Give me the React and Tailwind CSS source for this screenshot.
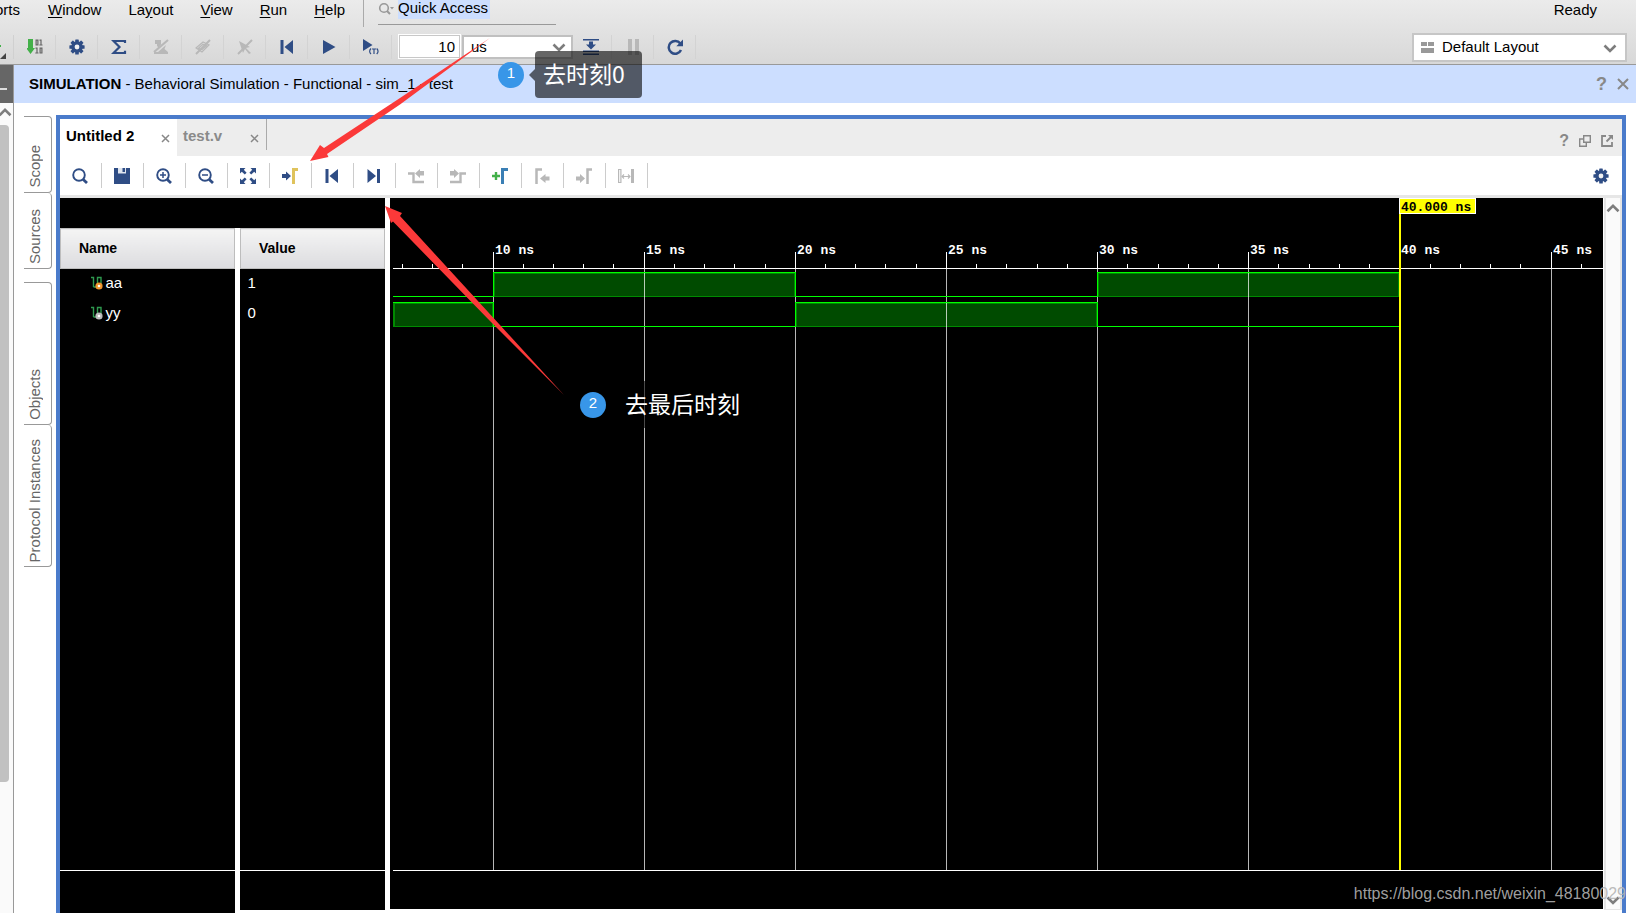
import React from 'react'
import clsx from 'clsx'

const BLUE = '#2f4d85'
const GREY = '#b8b8b8'

function Icon({ children, size = 16, className }) {
  return (
    <svg width={size} height={size} viewBox="0 0 16 16" fill="none" className={clsx('shrink-0', className)} aria-hidden="true">
      {children}
    </svg>
  )
}

function Gear() {
  return (
    <Icon>
      {[0, 45, 90, 135].map((a) => (
        <rect key={a} x="6.2" y="0.4" width="3.6" height="15.2" rx="0.6" fill={BLUE} transform={`rotate(${a} 8 8)`} />
      ))}
      <circle cx="8" cy="8" r="5.8" fill={BLUE} />
      <circle cx="8" cy="8" r="2.4" fill="#f2f2f2" />
    </Icon>
  )
}

function Chevron({ up, className }) {
  return (
    <svg width="14" height="9" viewBox="0 0 14 9" fill="none" className={className} aria-hidden="true">
      <path d={up ? 'M1.5 7.2 7 1.9l5.5 5.3' : 'M1.5 1.5 7 6.9l5.5-5.4'} stroke="#7d7d7d" strokeWidth="2.6" />
    </svg>
  )
}

function Magnifier({ sign }) {
  return (
    <Icon>
      <circle cx="7" cy="7" r="5.8" stroke={BLUE} strokeWidth="1.9" />
      <path d="m11 11.3 4 3.7" stroke={BLUE} strokeWidth="2.8" />
      {sign && <path d="M4 7h6" stroke={BLUE} strokeWidth="1.5" />}
      {sign === '+' && <path d="M7 4v6" stroke={BLUE} strokeWidth="1.5" />}
    </Icon>
  )
}

function ToStart() {
  return (
    <Icon>
      <path d="M1.5 1h3v14h-3zM14 1v14L5.500 8z" fill={BLUE} />
    </Icon>
  )
}

const mainTools = [
  {
    label: 'Program device',
    icon: (
      <Icon>
        <path d="M1 0h5v9h2l-4.500 6L-1 9h2z" fill="#43b049" />
        <g stroke="#666" strokeWidth="1.2">
          <path d="M9.1 1.1h1.8v4.8H9.1zM12.5 1.2H14V6M12.3 6h3.200M8.500 9.100H10V14M8.300 14h3.200M13.100 9.100h1.800V14h-1.800z" />
        </g>
      </Icon>
    ),
  },
  { label: 'Settings', icon: <Gear /> },
  {
    label: 'Report summary',
    icon: (
      <Icon>
        <path d="M14 4V2H2.5l6 6-6 6H14v-2.300" stroke={BLUE} strokeWidth="2.2" />
      </Icon>
    ),
  },
  {
    label: 'Disable schematic',
    icon: (
      <Icon>
        <path d="M2 1h6v4.500L5.500 8.500 4 7V5H2zM13 6l-1.500 4 3.500 3v2H1v-2h4z" fill={GREY} />
        <path d="M15 1 1 13" stroke={GREY} strokeWidth="2.2" />
      </Icon>
    ),
  },
  {
    label: 'Disable probe',
    icon: (
      <Icon>
        <path d="M1 9 8 3l6 3-7 7z M3.500 9.300 8 5.300l3.500 1.300-4.600 4z" stroke={GREY} strokeWidth="1.2" />
        <path d="M15 1 1 15" stroke={GREY} strokeWidth="2" />
      </Icon>
    ),
  },
  {
    label: 'Disable selection',
    icon: (
      <Icon>
        <path d="m2 2 11 6-4 1 5 5-2 1-4-5-2 4z" fill={GREY} />
        <path d="M15 1 1 15" stroke={GREY} strokeWidth="2" />
      </Icon>
    ),
  },
  { label: 'Restart', icon: <ToStart /> },
  {
    label: 'Run all',
    icon: (
      <Icon>
        <path d="M2 1v14l12.500-7z" fill={BLUE} />
      </Icon>
    ),
  },
  {
    label: 'Run for time',
    icon: (
      <Icon>
        <path d="M0 0v12l9.500-6z" fill={BLUE} />
        <path d="M8 9.500c-1.800 1.700-1.800 3.800 0 5.500M13.700 9.500c1.800 1.700 1.800 3.800 0 5.500M9 10h4M11 10v5" stroke={BLUE} strokeWidth="1.2" />
      </Icon>
    ),
  },
]

const runTools = [
  {
    label: 'Step',
    icon: (
      <Icon>
        <path d="M0 0h16v1.500H0zM0 11.500h16V13H0zM0 14.500h16V16H0zM6 2.500h4v3h3L8 10.500l-5-5h3z" fill={BLUE} />
      </Icon>
    ),
  },
  {
    label: 'Pause',
    icon: (
      <Icon>
        <path d="M3 0h4v16H3zM10 0h4v16h-4z" fill={GREY} />
      </Icon>
    ),
  },
  {
    label: 'Relaunch',
    icon: (
      <Icon>
        <path d="M13.3 4.500A6.400 6.400 0 1 0 14 11" stroke={BLUE} strokeWidth="2.5" />
        <path d="M16 .5v6.700H9.300z" fill={BLUE} />
      </Icon>
    ),
  },
]

const waveTools = [
  { label: 'Search', icon: <Magnifier /> },
  {
    label: 'Save',
    icon: (
      <Icon>
        <path d="M0 0h16v16H0z" fill={BLUE} />
        <path d="M4 0h8v5.500H4z" fill="#dfe5ef" />
        <path d="M8.500 0H11v4H8.500z" fill={BLUE} />
      </Icon>
    ),
  },
  { label: 'Zoom in', icon: <Magnifier sign="+" /> },
  { label: 'Zoom out', icon: <Magnifier sign="-" /> },
  {
    label: 'Zoom fit',
    icon: (
      <Icon>
        <path d="M0 0h5.500L3.800 1.800 6.600 4.800 4.800 6.600 1.800 3.800 0 5.500zM16 0v5.500l-1.800-1.700-3 2.800-1.800-1.800 2.800-3L10.500 0zM0 16v-5.500l1.800 1.700 3-2.800 1.800 1.800-2.800 3L5.500 16zM16 16h-5.500l1.700-1.800-2.800-3 1.800-1.800 3 2.800 1.800-1.700z" fill={BLUE} />
      </Icon>
    ),
  },
  {
    label: 'Go to cursor',
    icon: (
      <Icon>
        <path d="M0 6h4V3.500L9 8l-5 4.500V10H0z" fill={BLUE} />
        <path d="M11.500 16V1.500H16" stroke="#dfc35c" strokeWidth="3" />
      </Icon>
    ),
  },
  { label: 'Go to time 0', icon: <ToStart /> },
  {
    label: 'Go to last time',
    icon: (
      <Icon>
        <path d="M11 1h3v14h-3zM1.500 1v14L10 8z" fill={BLUE} />
      </Icon>
    ),
  },
  {
    label: 'Previous transition',
    icon: (
      <Icon>
        <path d="M0 5.500h5.500V14H16" stroke={GREY} strokeWidth="2.4" />
        <path d="M16 3v4.500h-4V10L7 5.500 12 1v2z" fill={GREY} />
      </Icon>
    ),
  },
  {
    label: 'Next transition',
    icon: (
      <Icon>
        <path d="M0 14h10.500V5.500H16" stroke={GREY} strokeWidth="2.4" />
        <path d="M0 3v4.500h4V10l5-4.500L4 1v2z" fill={GREY} />
      </Icon>
    ),
  },
  {
    label: 'Add marker',
    icon: (
      <Icon>
        <path d="M0 8h8M4 4v8" stroke="#43b049" strokeWidth="2.4" />
        <path d="M10.500 16V1.500H16" stroke="#3a7fb5" strokeWidth="3" />
      </Icon>
    ),
  },
  {
    label: 'Previous marker',
    icon: (
      <Icon>
        <path d="M2.500 16V1.500h5.500" stroke={GREY} strokeWidth="2.5" />
        <path d="M15.500 8.500v4h-4V15L6 10.500 11.500 6v2.500z" fill={GREY} />
      </Icon>
    ),
  },
  {
    label: 'Next marker',
    icon: (
      <Icon>
        <path d="M11.500 16V1.500H16" stroke={GREY} strokeWidth="2.5" />
        <path d="M0 8.500v4h4V15l5-4.500L4 6v2.500z" fill={GREY} />
      </Icon>
    ),
  },
  {
    label: 'Swap cursors',
    icon: (
      <Icon>
        <path d="M.6 1.500h2.300v13H.6z" stroke={GREY} strokeWidth="1.2" />
        <path d="M13 1h3v14h-3z" fill={GREY} />
        <path d="M4 8.500h8M6 6.500l-2 2 2 2M10 6.500l2 2-2 2" stroke={GREY} strokeWidth="1.1" />
      </Icon>
    ),
  },
]

const menus = [
  ['', 'W', 'indow'],
  ['La', 'y', 'out'],
  ['', 'V', 'iew'],
  ['', 'R', 'un'],
  ['', 'H', 'elp'],
]

const signals = [
  { name: 'aa', value: '1', badge: '#f0932b', high: [[10, 20], [30, 40]], low: [[null, 10], [20, 30]] },
  { name: 'yy', value: '0', badge: '#b9b9b9', high: [[null, 10], [20, 30]], low: [[10, 20], [30, 40]] },
]

function SignalIcon({ badge }) {
  return (
    <svg width="12" height="14" viewBox="0 0 12 14" fill="none" className="shrink-0" aria-hidden="true">
      <path d="M0 1.5h2.500V11M2.500 11h3M6.500 9V1.500H10V9" stroke="#2f9a4f" strokeWidth="1.4" />
      <circle cx="8" cy="10" r="3.6" fill={badge} />
      <circle cx="8" cy="10" r="1.3" fill="#fff" />
    </svg>
  )
}

// time in ns -> x in the wave area
const toX = (t) => (t === null ? 0 : Math.floor(100 + (t - 10) * 30.23))

const range = (from, to) => Array.from({ length: to - from + 1 }, (_, i) => from + i)

function Waveform() {
  const major = [10, 15, 20, 25, 30, 35, 40, 45]
  const minor = range(7, 48).filter((t) => t % 5 !== 0)

  return (
    <svg className="block h-full w-full" shapeRendering="crispEdges">
      {signals.map((s, i) => {
        const top = 74 + i * 30
        return (
          <g key={s.name}>
            {s.high.map(([a, b]) => (
              <g key={b}>
                <rect x={toX(a)} y={top} width={toX(b) - toX(a)} height="25" fill="#008a00" />
                <rect x={toX(a) + 2} y={top + 2} width={toX(b) - toX(a) - 3} height="22" fill="#004b00" />
              </g>
            ))}
          </g>
        )
      })}

      {major.map((t) => (
        <rect key={t} x={toX(t)} y="71" width="1" height="100%" fill="#fff" fillOpacity="0.72" />
      ))}

      {signals.map((s, i) => {
        const top = 74 + i * 30
        return (
          <g key={s.name} fill="#00ff00">
            {s.high.map(([a, b]) => (
              <rect key={b} x={toX(a)} y={top} width={toX(b) - toX(a)} height="1" />
            ))}
            {s.low.map(([a, b]) => (
              <rect key={b} x={toX(a)} y={top + 24} width={toX(b) - toX(a)} height="1" />
            ))}
            {[10, 20, 30].map((t) => (
              <rect key={t} x={toX(t)} y={top} width="1" height="25" />
            ))}
          </g>
        )
      })}

      <g fill="#fff">
        <rect x="0" y="70" width="100%" height="1" />
        {major.map((t) => (
          <rect key={t} x={toX(t)} y="54" width="1" height="16" />
        ))}
        {minor.map((t) => (
          <rect key={t} x={toX(t)} y="66" width="1" height="4" />
        ))}
      </g>

      <g className="font-['Liberation_Mono',monospace] text-[13px] font-bold" fill="#fff">
        {major.map((t) => (
          <text key={t} x={toX(t) + 2} y="56">{t} ns</text>
        ))}
      </g>

      <rect x={toX(40)} y="0" width="2" height="100%" fill="#ffff00" />
      <rect x={toX(40)} y="0" width="77" height="16" fill="#fff" />
      <rect x={toX(40) + 1} y="1" width="75" height="14" fill="#ffff00" />
      <text x={toX(40) + 2} y="13" className="font-['Liberation_Mono',monospace] text-[13px] font-bold" fill="#000">40.000 ns</text>
    </svg>
  )
}

function ToolButton({ tool, className }) {
  return (
    <button type="button" aria-label={tool.label} className={clsx('flex items-center justify-center border-r', className)}>
      {tool.icon}
    </button>
  )
}

function TopBar() {
  return (
    <header className="flex h-[65px] shrink-0 justify-between border-b border-[#999] bg-linear-to-b from-[#ebebeb] to-[#d8d8d8]">
      <div>
        <div className="flex h-[27px] items-start">
          <nav className="flex gap-[27px] leading-5">
            <button type="button" className="flex w-[21px] justify-end overflow-hidden pr-px">orts</button>
            {menus.map(([pre, key, post]) => (
              <button type="button" key={key}>{pre}<span className="underline underline-offset-2">{key}</span>{post}</button>
            ))}
          </nav>
          <div className="ml-[18px] h-full border-l border-[#aaa]" />
          <label className="ml-[14px] flex h-[25px] w-[178px] items-start border-b border-[#999]">
            <svg width="16" height="16" viewBox="0 0 16 16" fill="none" className="mr-1 shrink-0" aria-hidden="true">
              <circle cx="6" cy="8" r="4.3" stroke="#999" strokeWidth="1.6" />
              <path d="m9 11 3 3" stroke="#999" strokeWidth="2" />
              <path d="M12 7h4l-2 2.500z" fill="#999" />
            </svg>
            <input aria-label="Quick Access" defaultValue="Quick Access" className="h-[19px] w-[92px] bg-[#ccdeff] pb-[3px] outline-none" />
          </label>
        </div>

        <div className="flex h-[37px] items-center pt-[2px]">
          <div className="flex h-6 w-[14px] flex-col items-start justify-between border-r border-[#d0d0d0]">
            <span className="mt-[10px] h-[2px] w-px bg-[#43b049]" />
            <svg width="6" height="6" viewBox="0 0 6 6" aria-hidden="true"><path d="M6 0v6H0z" fill="#444" /></svg>
          </div>
          {mainTools.map((t) => (
            <ToolButton key={t.label} tool={t} className="h-6 w-[42px] border-[#d3d3d3]" />
          ))}
          <input aria-label="Run time" defaultValue="10" className="ml-[6px] h-[25px] w-[63px] border-2 border-[#c8c8c8] bg-white pr-1 text-right outline outline-1 -outline-offset-1 outline-white" />
          <div className="relative ml-px">
            <select aria-label="Time unit" className="block h-6 w-[111px] appearance-none border-2 border-[#c0c0c0] bg-white pl-[7px] leading-5">
              <option>us</option>
            </select>
            <Chevron className="pointer-events-none absolute right-[7px] top-2" />
          </div>
          {runTools.map((t, i) => (
            <ToolButton key={t.label} tool={t} className={clsx('h-6 border-[#d3d3d3]', i === 0 ? 'w-[39px] pr-[2px]' : 'w-[42px]')} />
          ))}
        </div>
      </div>

      <div className="mr-[9px] flex w-[215px] flex-col">
        <div className="h-[33px] pr-[30px] text-right leading-5">Ready</div>
        <div className="relative">
          <select aria-label="Layout" className="block h-[29px] w-full appearance-none border-2 border-[#c6c6c6] bg-white pb-px pl-7 leading-6">
            <option>Default Layout</option>
          </select>
          <svg width="13" height="11" viewBox="0 0 13 11" className="pointer-events-none absolute left-[9px] top-[9px]" aria-hidden="true">
            <path d="M0 0h6v4H0zM7 0h6v4H7zM0 6h13v5H0z" fill="#999" />
          </svg>
          <Chevron className="pointer-events-none absolute right-[10px] top-[11px]" />
        </div>
      </div>
    </header>
  )
}

function SideTab({ label, className }) {
  return (
    <button type="button" className={clsx('flex w-7 items-end justify-center rounded-r border-r border-b border-[#999] pb-1 pr-[6px] text-[#666]', className)}>
      <span className="rotate-180 leading-5 [writing-mode:vertical-rl]">{label}</span>
    </button>
  )
}

function WindowTabs() {
  return (
    <div className="flex h-[37px] shrink-0 bg-[#ededed] font-bold">
      <div className="flex w-[117px] items-center justify-between bg-white pb-[3px] pl-[6px] pr-[7px]">
        <button type="button">Untitled 2</button>
        <button type="button" aria-label="Close Untitled 2" className="mt-1">
          <svg width="9" height="9" viewBox="0 0 9 9" aria-hidden="true"><path d="m1 1 7 7M8 1 1 8" stroke="#888" strokeWidth="1.5" /></svg>
        </button>
      </div>
      <div className="flex w-[89px] items-center justify-between pb-[3px] pl-[6px] pr-[7px] text-[#8a8a8a]">
        <button type="button">test.v</button>
        <button type="button" aria-label="Close test.v" className="mt-1">
          <svg width="9" height="9" viewBox="0 0 9 9" aria-hidden="true"><path d="m1 1 7 7M8 1 1 8" stroke="#888" strokeWidth="1.5" /></svg>
        </button>
      </div>
      <div className="h-[31px] border-r border-[#aaa]" />
      <div className="ml-auto flex items-center gap-[10px] pr-[9px] pt-[6px] text-[#888]">
        <button type="button" aria-label="Help" className="text-base leading-4">?</button>
        <button type="button" aria-label="Restore">
          <svg width="12" height="12" viewBox="0 0 12 12" fill="none" aria-hidden="true"><path d="M4.700.7h6.600v6.600H4.700zM4.700 4H.7v7.300h6.600V7.500" stroke="#888" strokeWidth="1.4" /></svg>
        </button>
        <button type="button" aria-label="Float">
          <svg width="12" height="12" viewBox="0 0 12 12" fill="none" aria-hidden="true"><path d="M5 1H1v10h10V7M5.500 6.500 10 2" stroke="#888" strokeWidth="1.8" /><path d="M7 0h5v5z" fill="#888" /></svg>
        </button>
      </div>
    </div>
  )
}

const columnHead = 'h-10 border border-[#bdbdbd] bg-linear-to-b from-[#f4f4f4] to-[#dcdcdf] pb-[2px] pl-[18px] text-left text-sm font-bold text-black'

function SignalPanes() {
  return (
    <div className="flex w-[330px] shrink-0 flex-col">
      <div className="mr-[5px] h-[30px] shrink-0 bg-black" />
      <div className="flex flex-1 gap-[5px] pr-[5px] text-white">
        <div className="flex w-[175px] flex-col bg-black">
          <table className="w-full border-collapse">
            <thead><tr><th className={columnHead}>Name</th></tr></thead>
            <tbody>
              {signals.map((s) => (
                <tr key={s.name} className="h-[30px]">
                  <td className="pb-[2px] pl-[30px]">
                    <span className="flex items-center gap-[3px] leading-5"><SignalIcon badge={s.badge} />{s.name}</span>
                  </td>
                </tr>
              ))}
            </tbody>
          </table>
          <div className="flex-1 border-b border-white" />
          <div className="h-[42px]" />
        </div>
        <div className="mb-[3px] flex flex-1 flex-col bg-black">
          <table className="w-full border-collapse">
            <thead><tr><th className={columnHead}>Value</th></tr></thead>
            <tbody>
              {signals.map((s) => (
                <tr key={s.name} className="h-[30px]"><td className="pb-[2px] pl-[7px] leading-5">{s.value}</td></tr>
              ))}
            </tbody>
          </table>
          <div className="flex-1 border-b border-white" />
          <div className="h-[39px]" />
        </div>
      </div>
    </div>
  )
}

function Step({ n, text, className, pointer }) {
  return (
    <div className={clsx('absolute flex items-center', className)}>
      <span className="flex size-[26px] items-center justify-center rounded-full bg-[#3896e8] pb-1 text-[15px] leading-5 text-white">{n}</span>
      <span className={clsx('ml-[5px] h-0 w-0 border-y-[6px] border-r-[6px] border-y-transparent', pointer ? 'border-r-black/60' : 'border-r-transparent')} />
      <span className="h-[47px] rounded bg-black/60 pl-2 pr-[17px] text-[23px] leading-[45px] text-white font-['Noto_Sans_CJK_SC',sans-serif]">{text}</span>
    </div>
  )
}

export default function App() {
  return (
    <div className="relative flex h-screen flex-col overflow-hidden bg-white font-['Liberation_Sans',Arial,sans-serif] text-[15px] text-black">
      <TopBar />

      <div className="flex min-h-0 flex-1">
        <aside className="flex w-[14px] shrink-0 flex-col border-r border-[#999] bg-[#fafafa]">
          <div className="h-[38px] shrink-0 bg-[#666] pt-[23px]"><div className="h-[2px] w-[7px] bg-[#ddd]" /></div>
          <Chevron up className="-ml-[2px] mt-[5px] shrink-0" />
          <div className="mt-2 h-[657px] w-[9px] shrink-0 rounded-r bg-[#c1c1c1]" />
        </aside>

        <div className="flex min-w-0 flex-1 flex-col">
          <div className="flex h-[38px] shrink-0 items-center justify-between bg-[#ccdeff] pl-[15px] pr-[7px]">
            <h1><b>SIMULATION</b> - Behavioral Simulation - Functional - sim_1 - test</h1>
            <div className="flex items-center gap-[10px]">
              <button type="button" aria-label="Help" className="text-lg leading-5 font-bold text-[#888]">?</button>
              <button type="button" aria-label="Close">
                <svg width="12" height="12" viewBox="0 0 12 12" aria-hidden="true"><path d="m1 1 10 10M11 1 1 11" stroke="#888" strokeWidth="2" /></svg>
              </button>
            </div>
          </div>

          <div className="flex min-h-0 flex-1 pl-[10px] pr-[10px] pt-3">
            <div className="mr-1 flex flex-col pt-px">
              <SideTab label="Scope" className="h-[77px] border-t" />
              <SideTab label="Sources" className="h-[76px]" />
              <SideTab label="Objects" className="mt-[13px] h-[143px] border-t" />
              <SideTab label="Protocol Instances" className="h-[142px]" />
            </div>

            <main className="flex min-w-0 flex-1 flex-col border-x-4 border-t-4 border-[#4a7bcb]">
              <WindowTabs />
              <div className="flex h-[42px] shrink-0 items-center border-b-[3px] border-[#e6e6e6]">
                {waveTools.map((t) => (
                  <ToolButton key={t.label} tool={t} className="h-[25px] w-[42px] border-[#ccc] pr-px" />
                ))}
                <button type="button" aria-label="Wave settings" className="ml-auto mr-[13px]"><Gear /></button>
              </div>

              <div className="flex min-h-0 flex-1">
                <SignalPanes />
                <div className="mb-1 flex min-w-0 flex-1 flex-col bg-black pl-[3px]">
                  <div className="min-h-0 flex-1 border-b border-white"><Waveform /></div>
                  <div className="h-[38px]" />
                </div>
                <div className="mb-[3px] ml-px flex w-[18px] flex-col items-end justify-between border-x-2 border-b border-[#e4e4e4] bg-[#fafafa] pb-1 pt-[6px]">
                  <Chevron up />
                  <Chevron />
                </div>
              </div>
            </main>
          </div>
        </div>
      </div>

      <svg className="pointer-events-none absolute inset-0 h-full w-full" aria-hidden="true">
        <path d="M310 161 320 145 324 148 400 98 490 38 400 104.500 327 154 328.500 157z" fill="#fb3939" />
        <path d="M385 206 402 213 400 216 494 318.500 564 395 490 321 393 221.500 391 223z" fill="#fb3939" />
      </svg>
      <Step n="1" text="去时刻0" pointer className="left-[498px] top-[51px]" />
      <Step n="2" text="去最后时刻" className="left-[580px] top-[381px]" />
      <span className="absolute bottom-[9px] right-[10px] text-base leading-5 text-[#b4b4b4]/90">https://blog.csdn.net/weixin_48180029</span>
    </div>
  )
}
